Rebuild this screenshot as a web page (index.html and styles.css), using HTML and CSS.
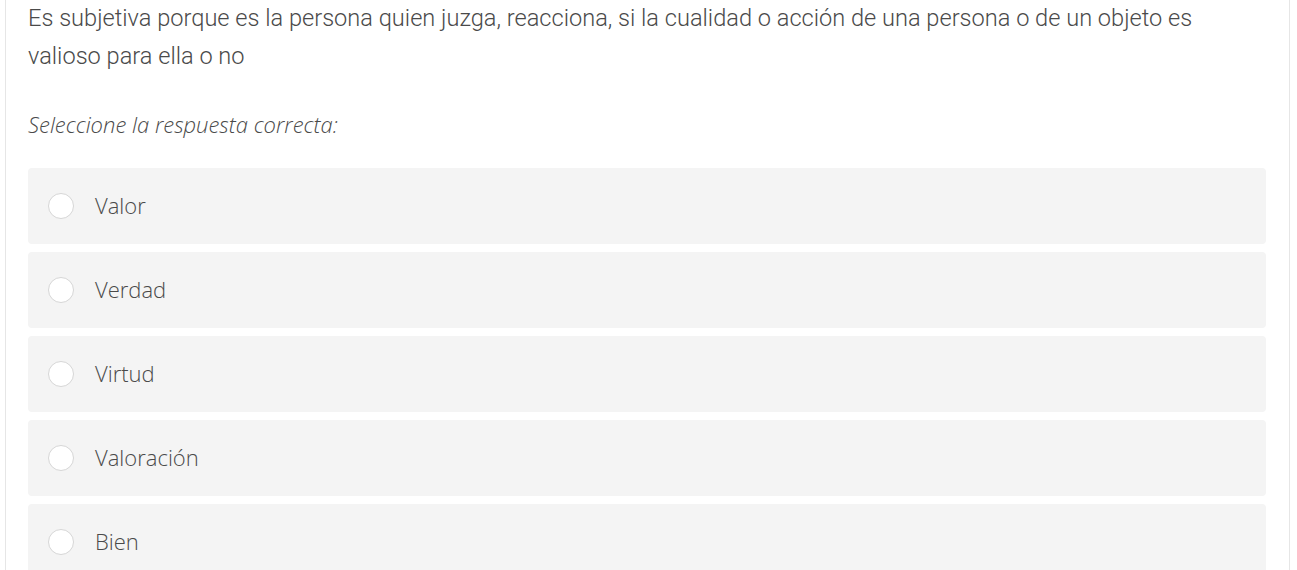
FILE: index.html
```html
<!DOCTYPE html>
<html lang="es">
<head>
  <meta charset="UTF-8">
  <title>Pregunta</title>
  <link rel="stylesheet" href="styles.css">
</head>
<body>
  <div class="card">
    <p class="question">Es subjetiva porque es la persona quien juzga, reacciona, si la cualidad o acción de una persona o de un objeto es valioso para ella o no</p>
    <p class="hint">Seleccione la respuesta correcta:</p>

    <div class="options">
      <label class="option"><span class="radio"></span><span class="text">Valor</span></label>
      <label class="option"><span class="radio"></span><span class="text">Verdad</span></label>
      <label class="option"><span class="radio"></span><span class="text">Virtud</span></label>
      <label class="option"><span class="radio"></span><span class="text">Valoración</span></label>
      <label class="option"><span class="radio"></span><span class="text">Bien</span></label>
    </div>
  </div>
</body>
</html>
```

FILE: styles.css
```css
body { margin: 0; background: #fff; font-family: Roboto, "Liberation Sans", sans-serif; color: #4a4a4a; }
.card { margin: 0 7px 0 5px; border-left: 1px solid #e6e6e6; border-right: 1px solid #e6e6e6; padding: 0 23px 20px 22px; min-height: 600px; }
.question { margin: -1px 0 0; font-size: 23.6px; font-weight: 300; line-height: 38px; }
.hint { margin: 30px 0 25px; font-family: "Open Sans", sans-serif; font-size: 22px; font-weight: 300; font-style: italic; line-height: 38px; }
.options { display: flex; flex-direction: column; gap: 8px; }
.option { display: flex; align-items: center; height: 76px; background: #f4f4f4; border-radius: 4px; padding: 0 0 3px 20px; box-sizing: border-box; }
.radio { width: 24px; height: 24px; border: 1px solid #d6d6d6; border-radius: 50%; background: #fff; margin: 3px 21px 0 0; }
.text { font-family: "Open Sans", sans-serif; font-size: 22px; font-weight: 300; }
```
